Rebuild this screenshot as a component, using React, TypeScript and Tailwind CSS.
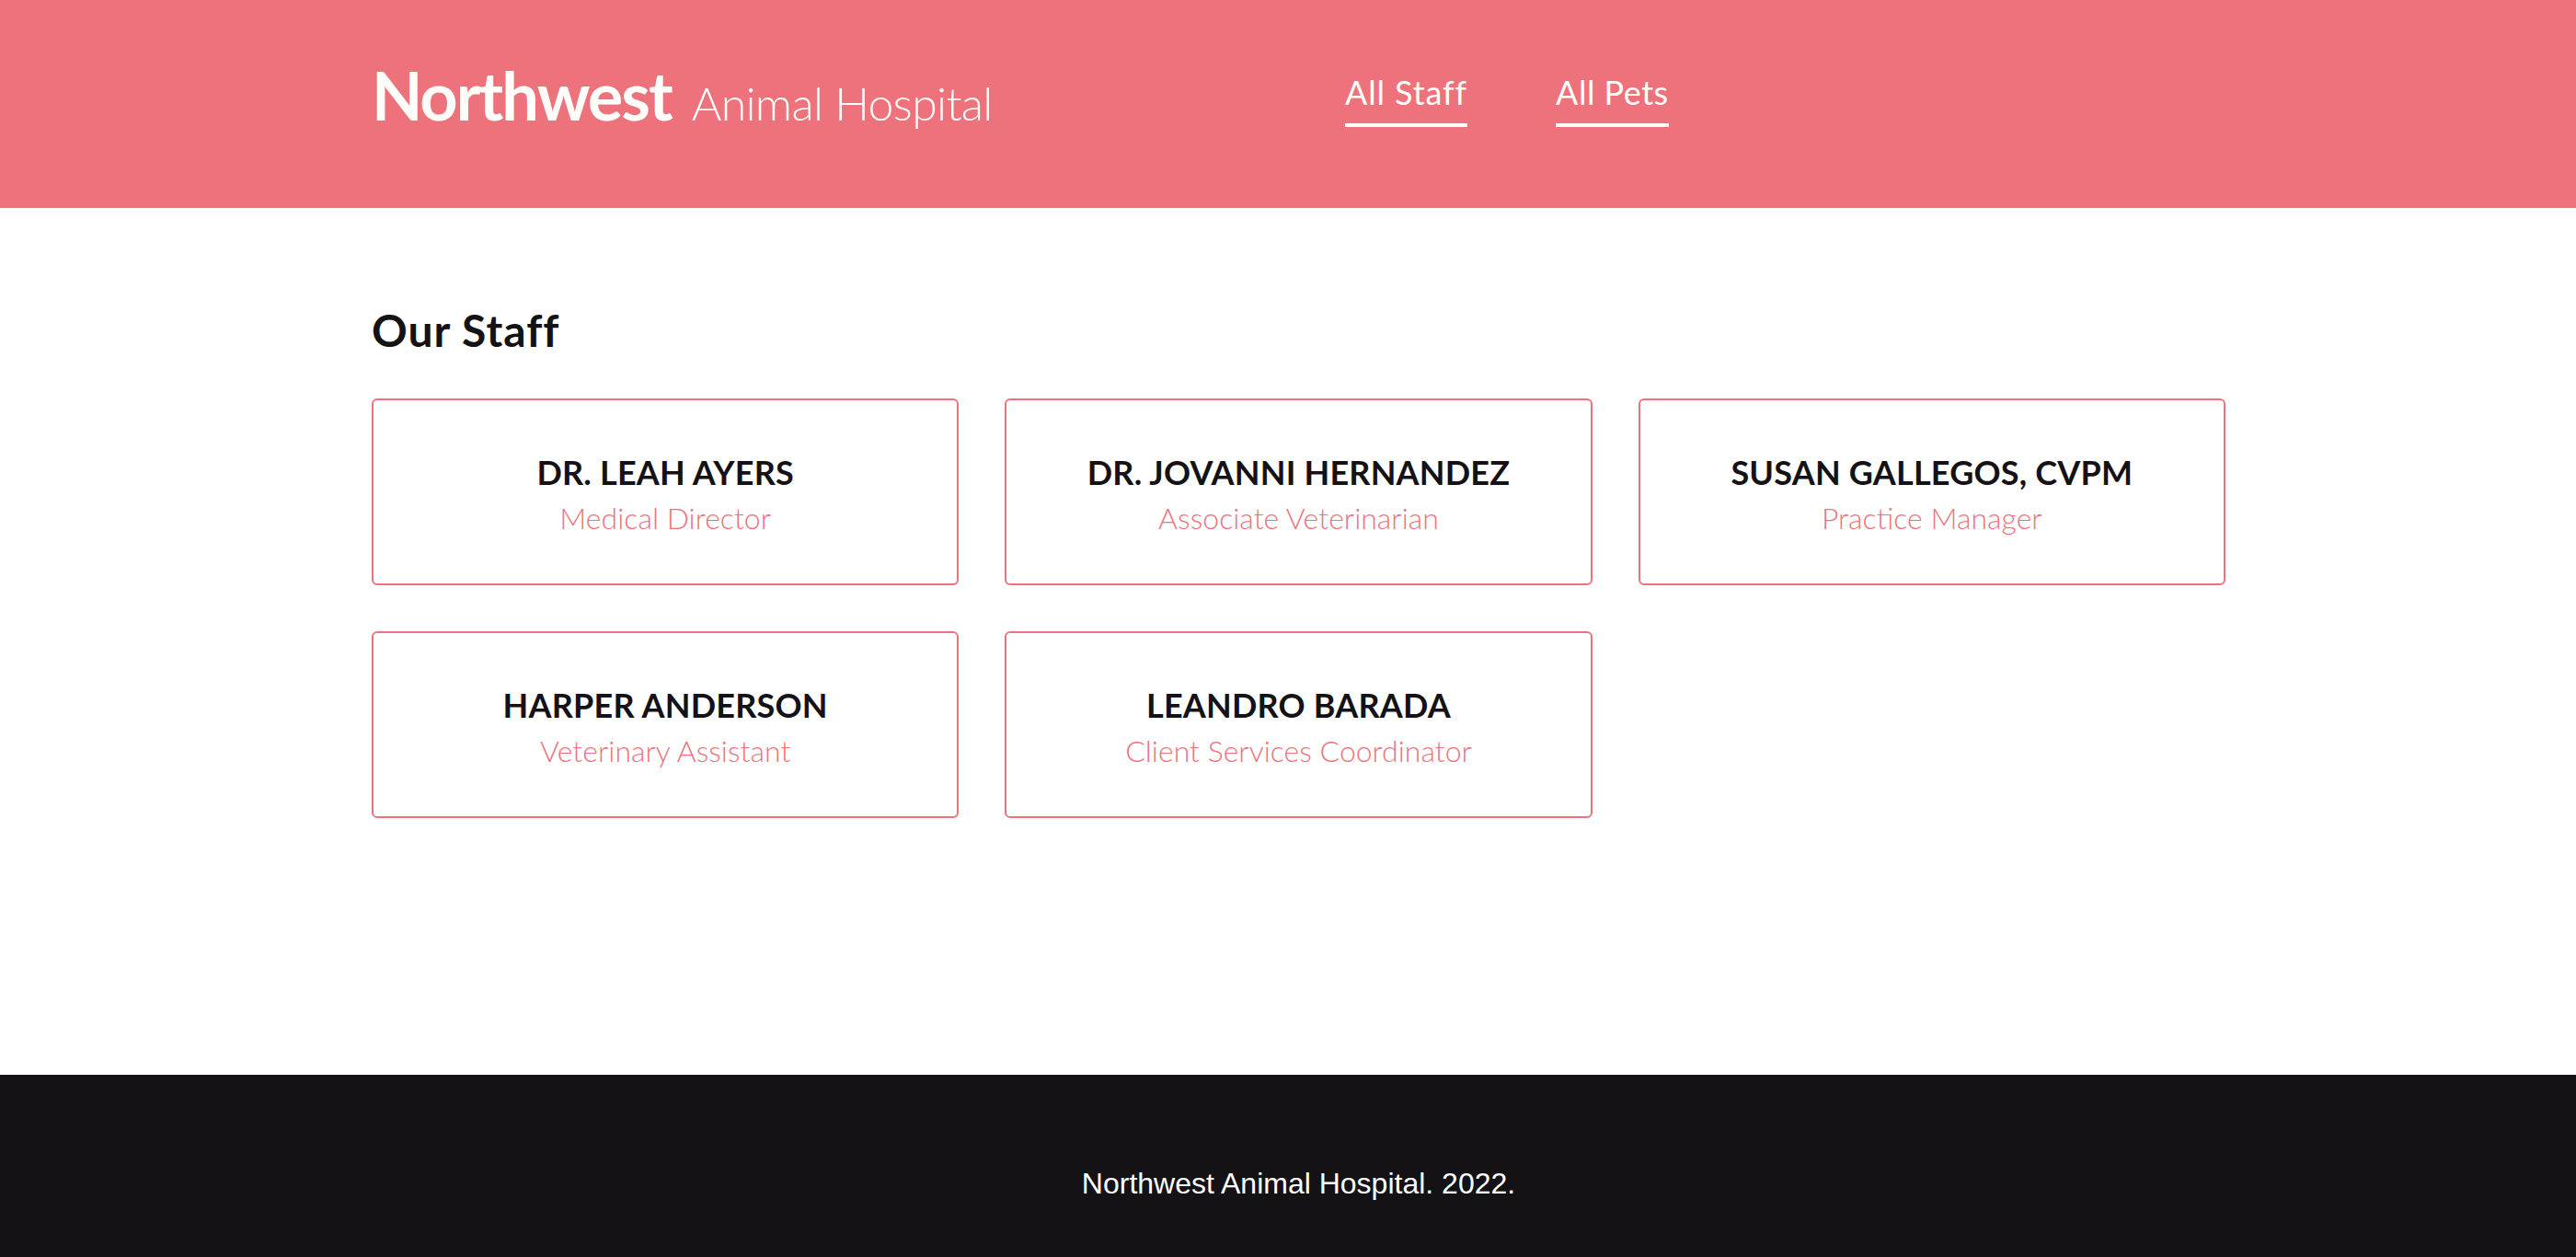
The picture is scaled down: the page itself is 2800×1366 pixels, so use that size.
const staff = [
  { name: "Dr. Leah Ayers", role: "Medical Director" },
  { name: "Dr. Jovanni Hernandez", role: "Associate Veterinarian" },
  { name: "Susan Gallegos, CVPM", role: "Practice Manager" },
  { name: "Harper Anderson", role: "Veterinary Assistant" },
  { name: "Leandro Barada", role: "Client Services Coordinator" },
];

function StaffCard({ name, role }: { name: string; role: string }) {
  return (
    <div className="flex h-[203px] flex-col items-center justify-center rounded-[6px] border-2 border-[#ee727b] pt-[5px]">
      <h3 className="text-[36px] font-bold uppercase leading-none tracking-[0.2px] text-[#141215]">{name}</h3>
      <p className="mt-[16px] text-[32px] font-light leading-none text-[#ee727b]">{role}</p>
    </div>
  );
}

export default function App() {
  return (
    <div className="flex min-h-screen flex-col bg-white font-['Lato',sans-serif]">
      {/* header */}
      <header className="h-[232px] border-b-[6px] border-[#fcfbf7] bg-[#ee727b] text-[#fffdf9]">
        <div className="ml-[404px] flex w-[2015px] items-start">
          <div className="flex w-[1058px] items-baseline pt-[67px] leading-none">
            <span className="text-[72px] font-bold tracking-[-2px]">Northwest</span>
            <span className="ml-[22px] text-[50px] font-light tracking-[-0.7px]">Animal Hospital</span>
          </div>
          <nav className="flex gap-[96px] pt-[82px]">
            <a href="#" className="border-b-4 border-[#fffdf9] pb-[16px] text-[36px] leading-none tracking-[0.9px]">
              All Staff
            </a>
            <a href="#" className="border-b-4 border-[#fffdf9] pb-[16px] text-[36px] leading-none tracking-[0.5px]">
              All Pets
            </a>
          </nav>
        </div>
      </header>

      {/* staff list */}
      <main className="flex-1">
        <div className="ml-[404px] w-[2015px] pt-[103px]">
          <h2 className="text-[48px] font-bold leading-none tracking-[1px] text-[#141215]">Our Staff</h2>
          <div className="mt-[50px] grid grid-cols-3 gap-[50px]">
            {staff.map((s) => (
              <StaffCard key={s.name} name={s.name} role={s.role} />
            ))}
          </div>
        </div>
      </main>

      <footer className="bg-[#141215] pt-[94px] pb-[56px]">
        <p className="ml-[404px] w-[2015px] text-center font-['Liberation_Sans',Arial,sans-serif] text-[32px] leading-[48px] text-white">
          Northwest Animal Hospital. 2022.
        </p>
      </footer>
    </div>
  );
}
